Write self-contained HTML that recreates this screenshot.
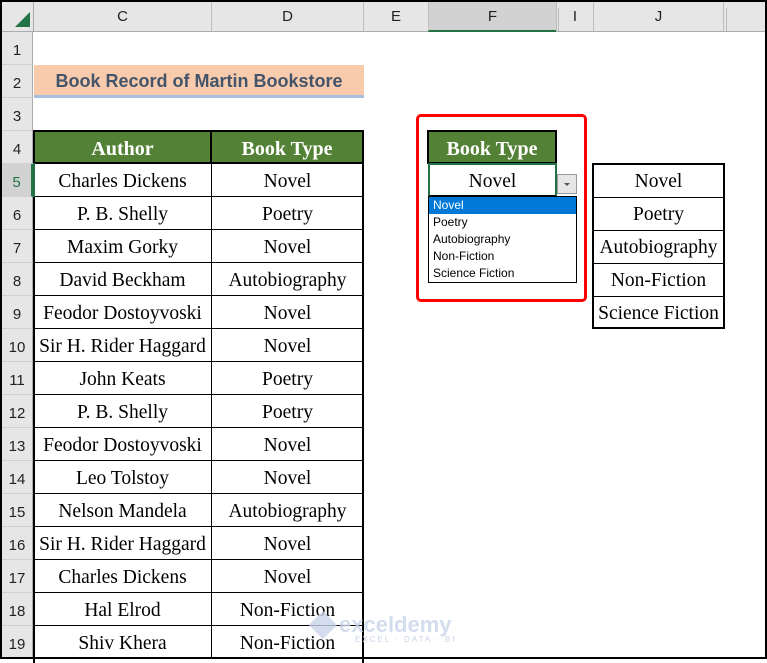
<!DOCTYPE html>
<html><head><meta charset="utf-8"><style>
*{margin:0;padding:0;box-sizing:border-box}
body{width:767px;height:659px;overflow:hidden;background:#fff;position:relative;font-family:"Liberation Serif",serif}
.a{position:absolute}
.hdr{position:absolute;top:2px;height:30px;background:#e6e6e6;border-bottom:1px solid #ababab;font:15px "Liberation Sans",sans-serif;color:#222;text-align:center;line-height:30px}
.sep{position:absolute;top:8px;height:23px;width:1px;background:#bdbdbd}
.rh{position:absolute;left:2px;width:31px;background:#e6e6e6;border-right:1px solid #ababab;border-bottom:1px solid #d0d0d0;font:15px "Liberation Sans",sans-serif;color:#222;text-align:center;padding-top:10px}
.c{position:absolute;height:34px;border:1px solid #000;text-align:center;font-size:19.5px;line-height:32px;padding-top:2px;color:#000;white-space:nowrap}
.g{background:#538135;color:#fff;font-weight:bold;font-size:20px;border:2px solid #000;line-height:30px}
</style></head><body>
<div class="a" style="left:0;top:0;width:767px;height:659px;border:2px solid #000;z-index:10;pointer-events:none"></div>
<div class="hdr" style="left:2px;width:763px"></div>
<svg class="a" style="left:14px;top:12px" width="17" height="16"><polygon points="16,0 16,15 1,15" fill="#217346"/></svg>
<div class="hdr" style="left:33px;width:178px;border-left:1px solid #ababab">C</div>
<div class="hdr" style="left:211px;width:152px;border-left:1px solid #bdbdbd">D</div>
<div class="hdr" style="left:363px;width:65px;border-left:1px solid #bdbdbd">E</div>
<div class="hdr" style="left:428px;width:128px;background:#d2d2d2;border-bottom:2px solid #217346;border-left:1px solid #bdbdbd">F</div>
<div class="hdr" style="left:556px;width:37px;border-left:1px solid #bdbdbd">I</div>
<div class="sep" style="left:558px"></div>
<div class="hdr" style="left:593px;width:130px;border-left:1px solid #bdbdbd">J</div>
<div class="hdr" style="left:723px;width:42px;border-left:1px solid #bdbdbd"></div>
<div class="sep" style="left:726px"></div>

<div class="rh" style="top:32px;height:33px">1</div>
<div class="rh" style="top:65px;height:33px">2</div>
<div class="rh" style="top:98px;height:33px">3</div>
<div class="rh" style="top:131px;height:33px">4</div>
<div class="rh" style="top:164px;height:33px;background:#d2d2d2;border-right:2px solid #217346;color:#217346">5</div>
<div class="rh" style="top:197px;height:33px">6</div>
<div class="rh" style="top:230px;height:33px">7</div>
<div class="rh" style="top:263px;height:33px">8</div>
<div class="rh" style="top:296px;height:33px">9</div>
<div class="rh" style="top:329px;height:33px">10</div>
<div class="rh" style="top:362px;height:33px">11</div>
<div class="rh" style="top:395px;height:33px">12</div>
<div class="rh" style="top:428px;height:33px">13</div>
<div class="rh" style="top:461px;height:33px">14</div>
<div class="rh" style="top:494px;height:33px">15</div>
<div class="rh" style="top:527px;height:33px">16</div>
<div class="rh" style="top:560px;height:33px">17</div>
<div class="rh" style="top:593px;height:33px">18</div>
<div class="rh" style="top:626px;height:33px">19</div>

<div class="a" style="left:34px;top:65px;width:330px;height:30px;background:#f8cbad;font:bold 18px 'Liberation Sans',sans-serif;color:#44546a;text-align:center;line-height:33px">Book Record of Martin Bookstore</div>
<div class="a" style="left:34px;top:95px;width:330px;height:3px;background:#a9bfe0"></div>

<div class="c g" style="left:33px;top:130px;width:179px">Author</div>
<div class="c g" style="left:210px;top:130px;width:154px">Book Type</div>
<div style="position:absolute;left:33px;top:163px;width:331px;height:500px;border-left:2px solid #000;border-right:2px solid #000"></div>
<div class="c" style="left:33px;top:163px;width:179px">Charles Dickens</div><div class="c" style="left:211px;top:163px;width:153px">Novel</div>
<div class="c" style="left:33px;top:196px;width:179px">P. B. Shelly</div><div class="c" style="left:211px;top:196px;width:153px">Poetry</div>
<div class="c" style="left:33px;top:229px;width:179px">Maxim Gorky</div><div class="c" style="left:211px;top:229px;width:153px">Novel</div>
<div class="c" style="left:33px;top:262px;width:179px">David Beckham</div><div class="c" style="left:211px;top:262px;width:153px">Autobiography</div>
<div class="c" style="left:33px;top:295px;width:179px">Feodor Dostoyvoski</div><div class="c" style="left:211px;top:295px;width:153px">Novel</div>
<div class="c" style="left:33px;top:328px;width:179px">Sir H. Rider Haggard</div><div class="c" style="left:211px;top:328px;width:153px">Novel</div>
<div class="c" style="left:33px;top:361px;width:179px">John Keats</div><div class="c" style="left:211px;top:361px;width:153px">Poetry</div>
<div class="c" style="left:33px;top:394px;width:179px">P. B. Shelly</div><div class="c" style="left:211px;top:394px;width:153px">Poetry</div>
<div class="c" style="left:33px;top:427px;width:179px">Feodor Dostoyvoski</div><div class="c" style="left:211px;top:427px;width:153px">Novel</div>
<div class="c" style="left:33px;top:460px;width:179px">Leo Tolstoy</div><div class="c" style="left:211px;top:460px;width:153px">Novel</div>
<div class="c" style="left:33px;top:493px;width:179px">Nelson Mandela</div><div class="c" style="left:211px;top:493px;width:153px">Autobiography</div>
<div class="c" style="left:33px;top:526px;width:179px">Sir H. Rider Haggard</div><div class="c" style="left:211px;top:526px;width:153px">Novel</div>
<div class="c" style="left:33px;top:559px;width:179px">Charles Dickens</div><div class="c" style="left:211px;top:559px;width:153px">Novel</div>
<div class="c" style="left:33px;top:592px;width:179px">Hal Elrod</div><div class="c" style="left:211px;top:592px;width:153px">Non-Fiction</div>
<div class="c" style="left:33px;top:625px;width:179px">Shiv Khera</div><div class="c" style="left:211px;top:625px;width:153px">Non-Fiction</div>
<div class="a" style="left:33px;top:163px;width:2px;height:34px;background:#217346"></div>

<div class="a" style="left:416px;top:114px;width:171px;height:188px;border:3px solid #f00;border-radius:5px"></div>
<div class="c g" style="left:427px;top:130px;width:130px">Book Type</div>
<div class="c" style="left:428px;top:163px;width:129px;height:34px;border:2px solid #217346;border-bottom:2px solid #000;line-height:30px">Novel</div>
<div class="a" style="left:557px;top:174px;width:20px;height:20px;background:#e6e6e6;border:1px solid #999"><svg width="18" height="18"><polygon points="6,8 12,8 9,11" fill="#555"/></svg></div>
<div class="a" style="left:428px;top:196px;width:149px;height:87px;border:1px solid #000;background:#fff;font:12px 'Liberation Sans',sans-serif;line-height:17px;color:#000">
<div style="background:#0078d7;color:#fff;padding-left:4px">Novel</div>
<div style="padding-left:4px">Poetry</div>
<div style="padding-left:4px">Autobiography</div>
<div style="padding-left:4px">Non-Fiction</div>
<div style="padding-left:4px">Science Fiction</div>
</div>

<div class="a" style="left:592px;top:163px;width:133px;height:166px;border:2px solid #000"></div>
<div class="c" style="left:593px;top:164px;width:131px;border-width:0 0 1px 0">Novel</div>
<div class="c" style="left:593px;top:197px;width:131px;border-width:0 0 1px 0">Poetry</div>
<div class="c" style="left:593px;top:230px;width:131px;border-width:0 0 1px 0">Autobiography</div>
<div class="c" style="left:593px;top:263px;width:131px;border-width:0 0 1px 0">Non-Fiction</div>
<div class="c" style="left:593px;top:296px;width:131px;border-width:0">Science Fiction</div>

<div class="a" style="left:313px;top:612px;font:bold 22px 'Liberation Sans',sans-serif;color:#c9d5ea;opacity:.8"><span style="display:inline-block;width:20px;height:20px;background:#c9d5ea;transform:rotate(45deg);margin-right:6px;vertical-align:-3px"></span>exceldemy</div>
<div class="a" style="left:355px;top:635px;font:8px 'Liberation Sans',sans-serif;letter-spacing:2px;color:#c9d5ea">EXCEL · DATA · BI</div>
</body></html>
